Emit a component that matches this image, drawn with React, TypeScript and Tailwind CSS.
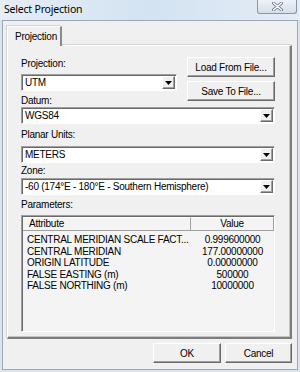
import React from 'react'

const ui = { fontFamily: '"Liberation Sans", Arial, sans-serif' }

function DropArrow() {
  return (
    <div className="mr-[1px] flex h-[13px] w-[13px] shrink-0 items-center justify-center border border-b-[#696969] border-l-white border-r-[#696969] border-t-white bg-[#f0f0f0] shadow-[inset_-1px_-1px_0_#a0a0a0]">
      <svg width="7" height="4" viewBox="0 0 7 4">
        <path d="M0 0h7L3.5 4z" fill="#000" />
      </svg>
    </div>
  )
}

function Select({ value, className = '' }: { value: string; className?: string }) {
  return (
    <div
      className={`flex h-[17px] items-center border border-b-white border-l-[#a0a0a0] border-r-white border-t-[#a0a0a0] bg-white shadow-[inset_1px_1px_0_#696969] ${className}`}
    >
      <span className="flex-1 truncate pl-[3px] text-[10px] leading-[15px] tracking-[-0.25px] text-black">{value}</span>
      <DropArrow />
    </div>
  )
}

function Label({ children, className = '' }: { children: React.ReactNode; className?: string }) {
  return (
    <div className={`h-[13px] text-[10px] leading-[13px] tracking-[-0.25px] text-black ${className}`}>
      {children}
    </div>
  )
}

function Btn({ children, className = '' }: { children: React.ReactNode; className?: string }) {
  return (
    <button
      type="button"
      className={`flex h-[20px] items-center justify-center border border-b-[#696969] border-l-white border-r-[#696969] border-t-white bg-[#f0f0f0] text-[10px] tracking-[-0.25px] text-black shadow-[inset_-1px_-1px_0_#a0a0a0] ${className}`}
    >
      {children}
    </button>
  )
}

const params = [
  ['CENTRAL MERIDIAN SCALE FACT...', '0.999600000'],
  ['CENTRAL MERIDIAN', '177.00000000'],
  ['ORIGIN LATITUDE', '0.00000000'],
  ['FALSE EASTING (m)', '500000'],
  ['FALSE NORTHING (m)', '10000000'],
]

export default function App() {
  return (
    <div className="flex h-[372px] w-[300px] flex-col overflow-hidden bg-[#dae5f0]" style={ui}>
      {/* title bar */}
      <div className="flex h-[20px] shrink-0 items-start bg-gradient-to-r from-[#e6edf5] via-[#d3e3f2] to-[#e4ecf5]">
        <span
          className="pl-[4px] pt-[2px] text-[10.5px] leading-[14px] tracking-[-0.2px] text-black"
          style={{ fontFamily: '"Noto Sans", "Open Sans", sans-serif' }}
        >
          Select Projection
        </span>
        <div className="ml-auto mr-[3px] flex h-[14px] w-[40px] items-center justify-center rounded-b-[3px] border border-t-0 border-[#8797aa] bg-gradient-to-b from-[#eef2f7] to-[#d6dee8]">
          <svg width="11" height="9" viewBox="0 0 11 9">
            <path d="M1.5 1 9.5 8M9.5 1 1.5 8" stroke="#6d7c8e" strokeWidth="3" strokeLinecap="round" />
            <path d="M1.5 1 9.5 8M9.5 1 1.5 8" stroke="#ffffff" strokeWidth="1.4" strokeLinecap="round" />
          </svg>
        </div>
      </div>

      {/* client area */}
      <div className="mx-[2px] mb-[2px] flex flex-1 flex-col border border-[#9aa8b8] bg-[#f0f0f0] pl-[4px] pt-[5px]">
        {/* tab strip */}
        <div className="relative z-10 -mb-px flex h-[20px] w-[55px] items-center border-l border-r-2 border-t border-l-white border-r-[#8a8a8a] border-t-white bg-[#f0f0f0] pl-[7px] text-[10px] tracking-[-0.25px] text-black shadow-[-1px_-1px_0_#d4d4d4]">
          Projection
        </div>

        {/* tab page */}
        <div className="flex h-[294px] w-[285px] flex-col border-b-2 border-l border-r-2 border-t border-b-[#7d7d7d] border-l-white border-r-[#7d7d7d] border-t-white pl-[13px] pr-[15px] pt-[11px] shadow-[inset_-1px_-1px_0_#c4c4c4,-1px_-1px_0_#d4d4d4]">
          <div className="flex">
            <div className="flex w-[156px] flex-col">
              <Label>Projection:</Label>
              <Select value="UTM" className="mt-[4px]" />
              <Label className="mt-[3px]">Datum:</Label>
            </div>
            <div className="ml-auto flex w-[88px] flex-col gap-[4px]">
              <Btn>Load From File...</Btn>
              <Btn>Save To File...</Btn>
            </div>
          </div>
          <Select value="WGS84" />
          <Label className="mt-[4px]">Planar Units:</Label>
          <Select value="METERS" className="mt-[5px]" />
          <Label className="mt-[1px]">Zone:</Label>
          <Select value="-60 (174°E - 180°E - Southern Hemisphere)" className="mt-[1px]" />
          <Label className="mt-[3px]">Parameters:</Label>

          {/* parameter list */}
          <div className="mt-[4px] flex h-[117px] flex-col border border-b-white border-l-[#a0a0a0] border-r-white border-t-[#a0a0a0] bg-[#f4f4f4] pl-px pt-px shadow-[inset_1px_1px_0_#696969]">
            <div className="flex h-[14px] shrink-0 text-[10px] leading-[12px] tracking-[-0.25px] text-black">
              <div className="w-[168px] border-b border-r border-t border-b-[#a0a0a0] border-r-[#a0a0a0] border-t-white pl-[6px]">
                Attribute
              </div>
              <div className="flex-1 border-b border-r border-t border-b-[#a0a0a0] border-r-[#a0a0a0] border-t-white text-center">
                Value
              </div>
            </div>
            <div className="pt-[3px]">
              {params.map(([k, v]) => (
                <div key={k} className="flex h-[11.5px] text-[10px] leading-[11.5px] tracking-[-0.25px] text-black">
                  <div className="w-[168px] truncate pl-[4px]">{k}</div>
                  <div className="flex-1 text-center">{v}</div>
                </div>
              ))}
            </div>
          </div>
        </div>

        {/* dialog buttons */}
        <div className="mt-[4px] flex w-[285px] justify-end gap-[4px]">
          <Btn className="w-[68px]">OK</Btn>
          <Btn className="w-[67px]">Cancel</Btn>
        </div>
      </div>
    </div>
  )
}
